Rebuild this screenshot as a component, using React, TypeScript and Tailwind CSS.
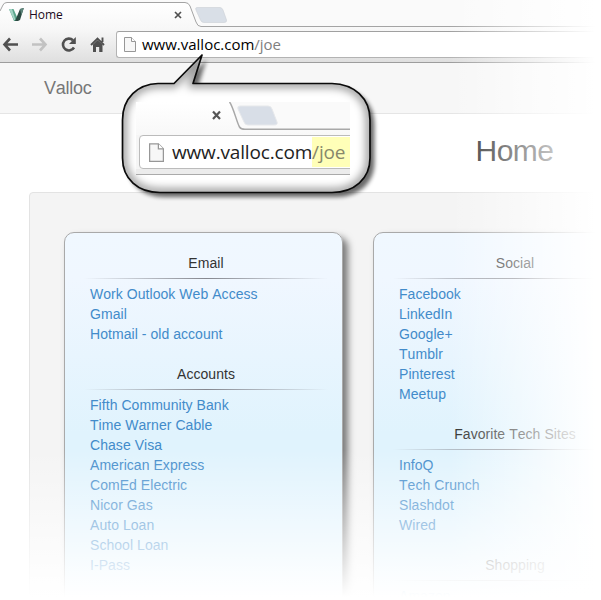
import React from 'react';

type Group = { title: string; links: string[] };

const left: Group[] = [
  { title: 'Email', links: ['Work Outlook Web Access', 'Gmail', 'Hotmail - old account'] },
  {
    title: 'Accounts',
    links: ['Fifth Community Bank', 'Time Warner Cable', 'Chase Visa', 'American Express', 'ComEd Electric', 'Nicor Gas', 'Auto Loan', 'School Loan', 'I-Pass'],
  },
];

const right: Group[] = [
  { title: 'Social', links: ['Facebook', 'LinkedIn', 'Google+', 'Tumblr', 'Pinterest', 'Meetup'] },
  { title: 'Favorite Tech Sites', links: ['InfoQ', 'Tech Crunch', 'Slashdot', 'Wired'] },
  { title: 'Shopping', links: ['Amazon'] },
];

function Card({ groups }: { groups: Group[] }) {
  return (
    <div className="flex h-[420px] w-[279px] shrink-0 flex-col gap-5 rounded-[10px] border border-[#a9a9a9] bg-[linear-gradient(#f0f8ff_0px,#f0f7ff_45px,#e0f3fd_200px,#e0f3fd_420px)] pt-5 pr-5 pl-[25px] tracking-[0.05px] shadow-[5px_5px_7px_rgba(0,0,0,0.5)]">
      {groups.map((g) => (
        <section key={g.title} className="flex flex-col">
          <h2 className="text-center text-[#333]">{g.title}</h2>
          <div className="-mx-1.5 mt-[5px] mb-[5px] h-px bg-[linear-gradient(90deg,transparent,#85878f_50%,transparent)]" />
          {g.links.map((l) => (
            <a key={l} className="whitespace-nowrap text-[#428bca]">{l}</a>
          ))}
        </section>
      ))}
    </div>
  );
}

function PageIcon({ className }: { className: string }) {
  return (
    <svg viewBox="0 0 12 15" className={className} fill="none">
      <path d="M.5.5h7l4 4v10H.5z" fill="#f7f7f7" stroke="#979797" />
      <path d="M7.5.5v4h4" fill="#fff" stroke="#979797" />
    </svg>
  );
}

function Callout() {
  const shape =
    'M158 83.5H174L202 55L193 83.5H332C354 84 370 98 370 120V158C370 179 354 192.500 332 192.500H160C138 192.500 122.500 179 122.500 158V120C122.500 98 138 84 158 83.500Z';
  return (
    <div className="absolute top-0 left-0 h-[215px] w-[400px]">
      <svg viewBox="0 0 400 215" className="absolute inset-0 h-full w-full">
        <defs>
          <filter id="drop" x="-10%" y="-10%" width="125%" height="125%">
            <feGaussianBlur stdDeviation="2.200" />
          </filter>
          <filter id="inner" x="-10%" y="-10%" width="120%" height="120%">
            <feGaussianBlur stdDeviation="4" />
          </filter>
          <clipPath id="bubble"><path d={shape} /></clipPath>
        </defs>
        <path d={shape} transform="translate(4.5 4.5)" fill="#000" opacity=".58" filter="url(#drop)" />
        <path d={shape} fill="#fff" />
        <g clipPath="url(#bubble)">
          <path d={shape} fill="none" stroke="#000" strokeOpacity=".42" strokeWidth="8" filter="url(#inner)" />
        </g>
        <path d={shape} fill="none" stroke="#0a0a0a" strokeWidth="1.700" strokeLinejoin="round" />
      </svg>
      <div className="absolute top-[102px] left-[136px] flex h-[73px] w-[214px] flex-col overflow-hidden">
        <svg viewBox="0 0 214 33" className="h-[33px] w-full shrink-0">
          <defs>
            <linearGradient id="zt" x2="0" y2="1"><stop stopColor="#fff" /><stop offset="1" stopColor="#f8f8f8" /></linearGradient>
          </defs>
          <path d="M0 0H214V33H0z" fill="url(#zt)" />
          <path d="M94 0C98 5 101 22 104 25Q105 27 109 27H214V0z" fill="#fafafa" />
          <path d="M93.500 0C97 4 101 21 103.500 25Q105 27.300 109 27.300H214" fill="none" stroke="#a8a8a8" strokeWidth="1.500" />
          <path d="M104 4H132Q135 4 136 7L141 20Q142 23 138 23H112Q109 23 108 20L102 7Q101 4 104 4Z" fill="#d8dee7" stroke="#e6e8eb" />
          <path d="M77 9.500l7 7.500m0-7.500l-7 7.500" stroke="#555" strokeWidth="2.200" />
        </svg>
        <div className="flex h-[34px] w-[220px] shrink-0 bg-[#f5f5f5] pl-[3px]">
          <div className="flex h-[34px] w-[217px] items-center rounded-[4px] border-[1.5px] border-[#bbb] bg-white pl-[9px]">
            <PageIcon className="h-[19px] w-[15px]" />
            <span className="ml-2 flex h-[30px] items-center whitespace-nowrap font-['Open_Sans','Noto_Sans',sans-serif] text-[19px] leading-[30px] tracking-[-0.17px] text-[#222]">
              www.valloc.com<span className="h-[30px] w-10 bg-[#ffffb8] text-[#88886b]">/joe</span>
            </span>
          </div>
        </div>
        <div className="h-[6px] border-b border-[#aaa] bg-[#ececec]" />
      </div>
    </div>
  );
}

export default function App() {
  return (
    <div className="relative h-[600px] w-[601px] overflow-hidden bg-white font-['Liberation_Sans',Arial,sans-serif] text-[14px] leading-5 [font-kerning:none]">
      <header className="flex h-[63px] flex-col border-b border-[#9d9d9d] bg-[linear-gradient(#fff,#f7f7f7_30px,#dfdfdf)]">
        <div className="relative h-[27px] shrink-0">
          <svg viewBox="0 0 601 27" className="absolute inset-0 h-full w-full">
            <defs>
              <linearGradient id="tab" x2="0" y2="1"><stop stopColor="#fff" /><stop offset="1" stopColor="#f8f8f8" /></linearGradient>
            </defs>
            <path d="M0 0H601V27H0z" fill="#fafafa" />
            <path d="M0 27V11L3 5Q4 2.500 7 2.500H185Q188.500 2.500 190 6L196 22Q197.500 26.500 201 26.500H601V27z" fill="url(#tab)" />
            <path d="M0 11L3 5Q4 2.500 7 2.500H185Q188.500 2.500 190 6L196 22Q197.500 26.500 201 26.500H601" fill="none" stroke="#a4a4a4" />
            <path d="M197 7.500H220Q222 7.500 223 10L226.500 20Q227 22.500 224 22.500H204Q201.500 22.500 200.500 20L196 10Q195 7.500 197 7.500Z" fill="#d9dfe7" stroke="#cfd3d9" strokeWidth=".7" />
          </svg>
          <div className="relative flex h-[27px] items-center pt-[3px] pl-[9px]">
            <svg viewBox="0 0 15 14" className="h-[14px] w-[15px]">
              <path d="M0 1H4.500L8 9V13H5z" fill="#5ba58b" />
              <path d="M0 1H3L6.500 12H5z" fill="#a3d3c4" />
              <path d="M6 13L7.500 9.500 11 1 14.800 0 11 12 9 13z" fill="#2b4a42" />
              <path d="M11 1L14.800 0 12.500 7z" fill="#5d857b" />
            </svg>
            <span className="ml-[5px] w-[145px] font-['Open_Sans','Noto_Sans',sans-serif] text-[12px] tracking-[-0.05px] text-[#200a20]">Home</span>
            <svg viewBox="0 0 8 8" className="h-2 w-2"><path d="M1 1l6 6M7 1L1 7" stroke="#505050" strokeWidth="1.700" /></svg>
          </div>
        </div>
        <div className="flex h-[35px] pt-1">
          <svg viewBox="0 0 116 31" className="h-[31px] w-[116px] shrink-0" fill="none">
            <path d="M10 7.500L4.500 13.500L10 19.500M5 13.500H18" stroke="#505050" strokeWidth="2.600" />
            <path d="M40 7.500L45.500 13.500L40 19.500M45 13.500H32" stroke="#c2c2c2" strokeWidth="2.600" />
            <path d="M73 9.300A5.900 5.900 0 1 0 74 16.500" stroke="#505050" strokeWidth="2.600" />
            <path d="M75.800 6V13H69z" fill="#505050" />
            <path d="M91 14L97.500 7.500 104 14M102.500 6.500V11" stroke="#505050" strokeWidth="1.900" />
            <path d="M93 13.500L97.500 9L102.500 13.500V21H99.200V16H96V21H93z" fill="#505050" />
          </svg>
          <div className="flex h-[27px] flex-1 items-center rounded-l-[3px] border border-r-0 border-[#b3b3b3] border-t-[#a0a0a0] bg-white pl-[7px]">
            <PageIcon className="h-[15px] w-3" />
            <span className="-mt-px ml-[6px] whitespace-nowrap font-['Open_Sans','Noto_Sans',sans-serif] text-[15px] tracking-[-0.01px] text-black">
              www.valloc.com<span className="text-[#808080]">/joe</span>
            </span>
          </div>
        </div>
      </header>
      <nav className="flex h-[51px] items-center border-b border-[#e5e5e5] bg-[#f7f7f7] pl-11 text-[18px] tracking-[-0.25px] text-[#777]">Valloc</nav>
      <h1 className="flex h-[78px] items-center justify-center pb-[5px] pl-[428px] text-[30px] leading-none tracking-[-0.5px] text-[#333]">
        Home
      </h1>
      <main className="ml-[29px] flex h-[440px] w-[690px] gap-[30px] rounded-[4px] border border-[#e3e3e3] bg-[#f4f4f4] pt-[39px] pl-[34px]">
        <Card groups={left} />
        <Card groups={right} />
      </main>
      <div className="absolute inset-y-0 right-0 w-[151px] bg-[linear-gradient(90deg,transparent,white_145px)]" />
      <div className="absolute inset-x-0 bottom-0 h-[150px] bg-[linear-gradient(transparent,white_147px)]" />
      <Callout />
    </div>
  );
}
